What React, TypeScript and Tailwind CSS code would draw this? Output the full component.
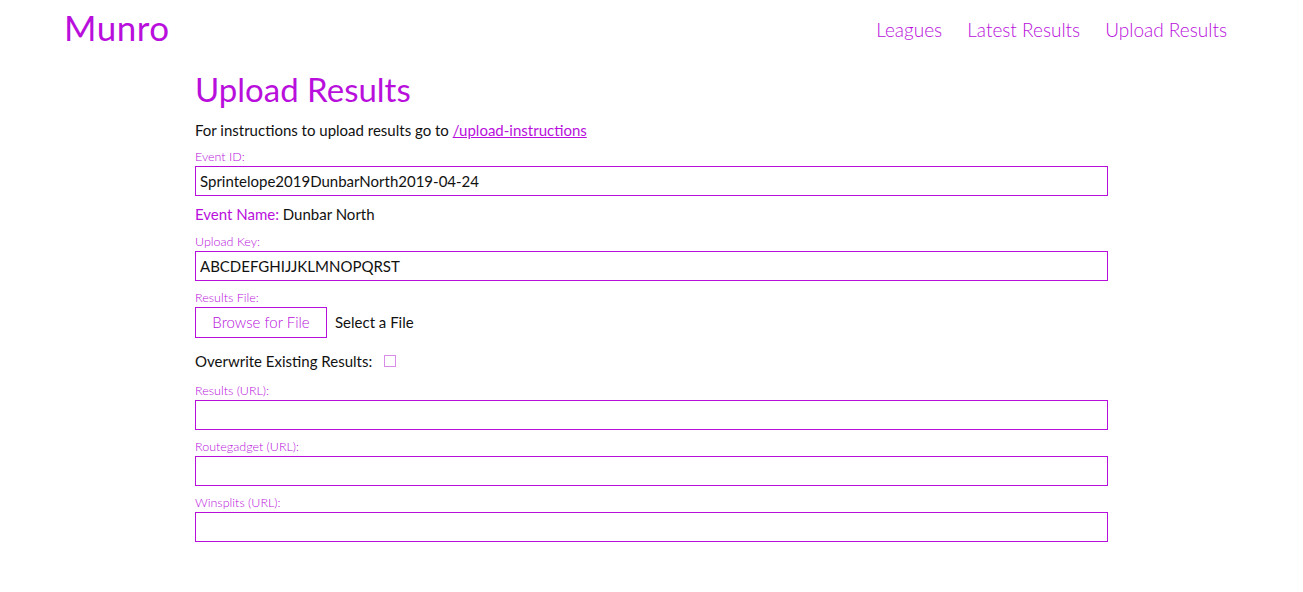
import React from 'react';

const purple = 'text-[#b90fdc]';

function Field({ label, value, className = 'mt-[9px]' }: { label: string; value?: string; className?: string }) {
  return (
    <div className={className}>
      <label className={`block text-[12.5px] font-light leading-[15px] ${purple}`}>{label}</label>
      <input
        readOnly
        value={value ?? ''}
        className="mt-[2px] block h-[30px] w-full border border-[#b90fdc] px-[4px] text-[15px] text-[#111] outline-none"
      />
    </div>
  );
}

export default function App() {
  return (
    <div className="min-h-[592px] bg-white font-['Lato',sans-serif] text-[#111]">
      {/* Header */}
      <header className="flex h-[60px] items-center justify-between pl-[64px] pr-[76px]">
        <h1 className={`mb-[6px] text-[35px] font-normal leading-none tracking-[0.5px] ${purple}`}>Munro</h1>
        <nav className={`flex gap-[25px] text-[19px] font-light ${purple}`}>
          <a href="#">Leagues</a>
          <a href="#">Latest Results</a>
          <a href="#">Upload Results</a>
        </nav>
      </header>

      <main className="mx-auto w-[913px]">
        <h2 className={`mt-[10px] text-[33px] font-normal leading-[38px] ${purple}`}>Upload Results</h2>
        <p className="mt-[12px] text-[15px] leading-[20px]">
          For instructions to upload results go to{' '}
          <a href="#" className={`underline ${purple}`}>/upload-instructions</a>
        </p>

        <Field label="Event ID:" value="Sprintelope2019DunbarNorth2019-04-24" className="mt-[9px]" />

        <p className="mt-[8px] text-[15px] leading-[20px]">
          <span className={purple}>Event Name:</span> Dunbar North
        </p>

        <Field label="Upload Key:" value="ABCDEFGHIJJKLMNOPQRST" className="mt-[10px]" />

        <div className="mt-[9px]">
          <label className={`block text-[12.5px] font-light leading-[15px] ${purple}`}>Results File:</label>
          <div className="mt-[2px] flex items-center gap-[8px]">
            <button className={`h-[31px] w-[132px] border border-[#b90fdc] text-[15px] font-light ${purple}`}>
              Browse for File
            </button>
            <span className="text-[15px]">Select a File</span>
          </div>
        </div>

        <div className="mt-[12px] flex items-center gap-[12px] text-[15px] leading-[22px]">
          <span>Overwrite Existing Results:</span>
          <span className="block h-[12px] w-[12px] border border-[#d98be9]" />
        </div>

        <Field label="Results (URL):" className="mt-[11px]" />
        <Field label="Routegadget (URL):" />
        <Field label="Winsplits (URL):" />
      </main>
    </div>
  );
}
